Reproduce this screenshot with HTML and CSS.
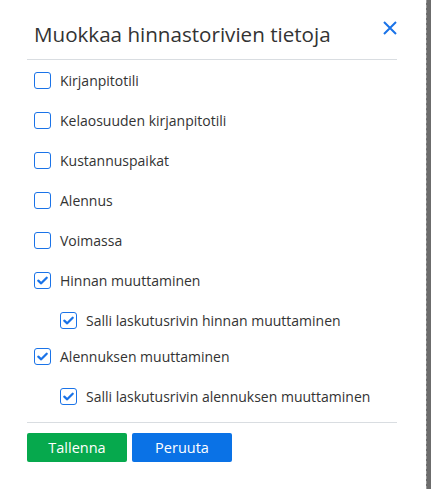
FILE: index.html
```html
<!DOCTYPE html>
<html lang="fi">
<head>
<meta charset="utf-8">
<title>Muokkaa hinnastorivien tietoja</title>
<link rel="stylesheet" href="styles.css">
</head>
<body>
<div class="screen">
  <div class="modal">
    <div class="modal-header">
      <h2 class="modal-title">Muokkaa hinnastorivien tietoja</h2>
      <button class="close" type="button" aria-label="Sulje">
        <svg width="14" height="14" viewBox="0 0 14 14"><path d="M1 1 L13 13 M13 1 L1 13" stroke="currentColor" stroke-width="2" fill="none"/></svg>
      </button>
    </div>
    <div class="options">
      <label class="option"><span class="box"></span>Kirjanpitotili</label>
      <label class="option"><span class="box"></span>Kelaosuuden kirjanpitotili</label>
      <label class="option"><span class="box"></span>Kustannuspaikat</label>
      <label class="option"><span class="box"></span>Alennus</label>
      <label class="option"><span class="box"></span>Voimassa</label>
      <label class="option"><span class="box checked"><svg viewBox="0 0 16 16"><path d="M3.5 8.2 L6.6 11 L12.5 5" /></svg></span>Hinnan muuttaminen</label>
      <label class="option sub"><span class="box checked"><svg viewBox="0 0 16 16"><path d="M3.5 8.2 L6.6 11 L12.5 5" /></svg></span>Salli laskutusrivin hinnan muuttaminen</label>
      <label class="option"><span class="box checked"><svg viewBox="0 0 16 16"><path d="M3.5 8.2 L6.6 11 L12.5 5" /></svg></span>Alennuksen muuttaminen</label>
      <label class="option sub"><span class="box checked"><svg viewBox="0 0 16 16"><path d="M3.5 8.2 L6.6 11 L12.5 5" /></svg></span>Salli laskutusrivin alennuksen muuttaminen</label>
    </div>
    <div class="modal-footer">
      <button class="btn btn-save" type="button">Tallenna</button>
      <button class="btn btn-cancel" type="button">Peruuta</button>
    </div>
  </div>
  <div class="backdrop"></div>
</div>
</body>
</html>
```
FILE: styles.css
```css
html, body {
  margin: 0;
  padding: 0;
  background: #fff;
}

body {
  font-family: "Open Sans", "Noto Sans", Arial, sans-serif;
  color: #333;
}

.screen {
  display: flex;
  width: 431px;
  height: 489px;
}

.modal {
  width: 426px;
  height: 489px;
  box-sizing: border-box;
  padding: 0 29px 0 27px;
  background: #fff;
}

.backdrop {
  flex: 1;
  background: #6c6c6c;
  border-left: 1px dashed #9a9a9a;
}

.modal-header {
  display: flex;
  justify-content: space-between;
  align-items: flex-start;
  height: 59px;
  padding-left: 7px;
  border-bottom: 1px solid #d9dde1;
  box-sizing: content-box;
}

.modal-title {
  margin: 21px 0 0;
  font-size: 20.6px;
  font-weight: 400;
  line-height: 26px;
  color: #333;
}

.close {
  margin: 21px 0 0;
  padding: 0;
  border: 0;
  background: none;
  color: #1a73e8;
  width: 14px;
  height: 14px;
  display: flex;
}

.options {
  display: flex;
  flex-direction: column;
  padding-left: 7px;
}

.option {
  display: flex;
  align-items: center;
  height: 40px;
  font-size: 14px;
  color: #333;
}

.option.sub {
  height: 36px;
  padding-top: 4px;
  box-sizing: border-box;
  padding-left: 26px;
}

.box {
  width: 17px;
  height: 17px;
  box-sizing: border-box;
  border: 1.5px solid #1a73e8;
  border-radius: 3px;
  margin-right: 9px;
  display: flex;
  align-items: center;
  justify-content: center;
  flex: none;
}

.box svg {
  width: 15px;
  height: 15px;
}

.box svg path {
  fill: none;
  stroke: #1a73e8;
  stroke-width: 2.4;
  stroke-linecap: round;
  stroke-linejoin: round;
}

.modal-footer {
  margin-top: 10px;
  border-top: 1px solid #d9dde1;
  padding-top: 10px;
  display: flex;
  gap: 5px;
}

.btn {
  width: 100px;
  height: 29px;
  border: 0;
  border-radius: 2px;
  color: #fff;
  font-family: "Open Sans", "Noto Sans", Arial, sans-serif;
  font-size: 14.5px;
  padding: 0;
}

.btn-save {
  background: #06a94d;
}

.btn-cancel {
  background: #0a72e6;
}
```
